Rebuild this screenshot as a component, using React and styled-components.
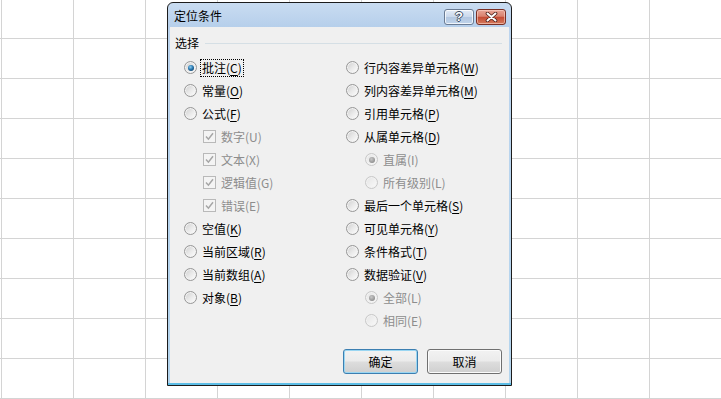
import React from "react";
import styled, { createGlobalStyle, css } from "styled-components";

const GlobalStyle = createGlobalStyle`
  html, body {
    margin: 0;
    padding: 0;
    background: #fff;
  }
  * {
    box-sizing: border-box;
  }
`;

const leftItems = [
  { kind: "radio", text: "批注", key: "C", checked: true, focused: true },
  { kind: "radio", text: "常量", key: "O" },
  { kind: "radio", text: "公式", key: "F" },
  { kind: "check", text: "数字", key: "U", sub: true, disabled: true, checked: true },
  { kind: "check", text: "文本", key: "X", sub: true, disabled: true, checked: true },
  { kind: "check", text: "逻辑值", key: "G", sub: true, disabled: true, checked: true },
  { kind: "check", text: "错误", key: "E", sub: true, disabled: true, checked: true },
  { kind: "radio", text: "空值", key: "K" },
  { kind: "radio", text: "当前区域", key: "R" },
  { kind: "radio", text: "当前数组", key: "A" },
  { kind: "radio", text: "对象", key: "B" },
];

const rightItems = [
  { kind: "radio", text: "行内容差异单元格", key: "W" },
  { kind: "radio", text: "列内容差异单元格", key: "M" },
  { kind: "radio", text: "引用单元格", key: "P" },
  { kind: "radio", text: "从属单元格", key: "D" },
  { kind: "radio", text: "直属", key: "I", sub: true, disabled: true, checked: true },
  { kind: "radio", text: "所有级别", key: "L", sub: true, disabled: true },
  { kind: "radio", text: "最后一个单元格", key: "S" },
  { kind: "radio", text: "可见单元格", key: "Y" },
  { kind: "radio", text: "条件格式", key: "T" },
  { kind: "radio", text: "数据验证", key: "V" },
  { kind: "radio", text: "全部", key: "L", sub: true, disabled: true, checked: true },
  { kind: "radio", text: "相同", key: "E", sub: true, disabled: true },
];

function Option({ item }) {
  const { kind, text, key, checked, disabled, sub, focused } = item;
  return (
    <Row $sub={sub}>
      {kind === "radio" ? (
        <Radio $checked={checked} $disabled={disabled} />
      ) : (
        <CheckBox $disabled={disabled}>
          {checked && (
            <svg width="9" height="9" viewBox="0 0 9 9">
              <path
                d="M1 4.6 L3.4 7.2 L8 1.2"
                fill="none"
                stroke={disabled ? "#a6a6a6" : "#1e395b"}
                strokeWidth="1.5"
              />
            </svg>
          )}
        </CheckBox>
      )}
      <Label $disabled={disabled} $focused={focused}>
        {text}(
        {disabled ? key : <u>{key}</u>})
      </Label>
    </Row>
  );
}

export default function App() {
  return (
    <>
      <GlobalStyle />
      <Sheet>
        <Dialog>
          <TitleBar>
            <Title>定位条件</Title>
            <CaptionButtons>
              <HelpButton>?</HelpButton>
              <CloseButton>
                <svg width="13" height="10" viewBox="0 0 13 10">
                  <path
                    d="M2.5 1.5 L10.5 8.5 M10.5 1.5 L2.5 8.5"
                    stroke="#4b1d16"
                    strokeWidth="3.6"
                    strokeLinecap="round"
                  />
                  <path
                    d="M2.5 1.5 L10.5 8.5 M10.5 1.5 L2.5 8.5"
                    stroke="#fff"
                    strokeWidth="2"
                    strokeLinecap="round"
                  />
                </svg>
              </CloseButton>
            </CaptionButtons>
          </TitleBar>
          <Body>
            <GroupHeader>
              <GroupLabel>选择</GroupLabel>
              <GroupLine />
            </GroupHeader>
            <Options>
              <Column>
                {leftItems.map((item, i) => (
                  <Option key={i} item={item} />
                ))}
              </Column>
              <Column>
                {rightItems.map((item, i) => (
                  <Option key={i} item={item} />
                ))}
              </Column>
            </Options>
            <Buttons>
              <PushButton $default>确定</PushButton>
              <PushButton>取消</PushButton>
            </Buttons>
          </Body>
        </Dialog>
      </Sheet>
    </>
  );
}

const Sheet = styled.div`
  position: relative;
  width: 721px;
  height: 399px;
  overflow: hidden;
  background-color: #fff;
  background-image: linear-gradient(to right, #d4d4d4 1px, transparent 1px),
    linear-gradient(to bottom, #d4d4d4 1px, transparent 1px);
  background-size: 72px 40px;
  background-position: 1px 0, 0 38px;
  font-family: "Noto Sans CJK SC", "Microsoft YaHei", sans-serif;
  font-size: 12px;
  color: #000;
`;

const Dialog = styled.div`
  position: absolute;
  left: 167px;
  top: 2px;
  width: 345px;
  height: 384px;
  display: flex;
  flex-direction: column;
  border: 1px solid #1c1c1c;
  border-radius: 6px 6px 0 0;
  background: linear-gradient(
    to bottom,
    #c9dcf1 0px,
    #b6cfeb 24px,
    #bcd4ee 26px,
    #b4d5ee calc(100% - 2px),
    #5cbde6 calc(100% - 2px)
  );
`;

const TitleBar = styled.div`
  height: 24px;
  display: flex;
  align-items: flex-start;
  padding-left: 6px;
`;

const Title = styled.div`
  margin-top: 4px;
  line-height: 18px;
  font-size: 12px;
`;

const CaptionButtons = styled.div`
  margin-left: auto;
  margin-top: 6px;
  margin-right: 5px;
  display: flex;
  gap: 2px;
`;

const captionBase = css`
  height: 16px;
  border-radius: 3px;
  display: flex;
  align-items: center;
  justify-content: center;
`;

const HelpButton = styled.div`
  ${captionBase}
  width: 30px;
  border: 1px solid #6a7b93;
  background: linear-gradient(to bottom, #e3ebf6 0%, #c9d8ec 50%, #b3c7e1 51%, #bfd3ea 100%);
  box-shadow: inset 0 0 0 1px rgba(255, 255, 255, 0.75);
  font-family: "Liberation Sans", Arial, sans-serif;
  font-weight: bold;
  font-size: 13px;
  line-height: 14px;
  color: #fff;
  text-shadow: 1px 0 0 #3e4c61, -1px 0 0 #3e4c61, 0 1px 0 #3e4c61, 0 -1px 0 #3e4c61;
`;

const CloseButton = styled.div`
  ${captionBase}
  width: 30px;
  border: 1px solid #7a2f24;
  background: linear-gradient(to bottom, #e8a597 0%, #d9826f 45%, #c54c35 52%, #d37a5c 100%);
  box-shadow: inset 0 0 0 1px rgba(255, 220, 210, 0.55);
`;

const Body = styled.div`
  flex: 1;
  margin: 0 2px 2px;
  background: #f0f0f0;
  display: flex;
  flex-direction: column;
  padding: 7px 7px 9px 5px;
`;

const GroupHeader = styled.div`
  height: 18px;
  display: flex;
  align-items: center;
`;

const GroupLabel = styled.span`
  line-height: 18px;
`;

const GroupLine = styled.div`
  flex: 1;
  height: 1px;
  margin: 1px 0 0 6px;
  background: #d5dfe5;
`;

const Options = styled.div`
  display: grid;
  grid-template-columns: 162px 1fr;
  margin-top: 4px;
  padding-left: 9px;
`;

const Column = styled.div`
  display: flex;
  flex-direction: column;
`;

const Row = styled.div`
  height: 23px;
  display: flex;
  align-items: center;
  padding-left: ${({ $sub }) => ($sub ? "19px" : "0")};
`;

const Radio = styled.span`
  position: relative;
  width: 13px;
  height: 13px;
  flex: none;
  border-radius: 50%;
  border: 1px solid ${({ $disabled }) => ($disabled ? "#c8c8c8" : "#979797")};
  background: ${({ $disabled }) =>
    $disabled
      ? "linear-gradient(135deg, #e4e4e4, #fafafa)"
      : "linear-gradient(135deg, #cdcdcd 0%, #e9e9e9 50%, #ffffff 100%)"};
  box-shadow: inset 0 0 0 1px ${({ $disabled }) => ($disabled ? "#f2f2f2" : "#f3f3f3")};

  &::after {
    content: "";
    display: ${({ $checked }) => ($checked ? "block" : "none")};
    position: absolute;
    left: 2.5px;
    top: 2.5px;
    width: 6px;
    height: 6px;
    border-radius: 50%;
    background: ${({ $disabled }) =>
      $disabled
        ? "radial-gradient(circle at 40% 35%, #c8c8c8, #8e8e8e 75%)"
        : "radial-gradient(circle at 40% 35%, #8fd0f2, #2a78b0 45%, #14466e 80%)"};
  }
`;

const CheckBox = styled.span`
  width: 13px;
  height: 13px;
  flex: none;
  display: flex;
  align-items: center;
  justify-content: center;
  border: 1px solid ${({ $disabled }) => ($disabled ? "#b9b9b9" : "#8e8f8f")};
  background: ${({ $disabled }) => ($disabled ? "#f4f4f4" : "#fff")};
`;

const Label = styled.span`
  margin-left: 3px;
  padding: 0 1px;
  line-height: 16px;
  white-space: nowrap;
  border: 1px dotted ${({ $focused }) => ($focused ? "#000" : "transparent")};
  color: ${({ $disabled }) => ($disabled ? "#8d8d8d" : "#000")};

  u {
    text-underline-offset: 2px;
  }
`;

const Buttons = styled.div`
  margin-top: auto;
  display: flex;
  justify-content: flex-end;
  gap: 9px;
`;

const PushButton = styled.div`
  width: 75px;
  height: 25px;
  display: flex;
  align-items: center;
  justify-content: center;
  border-radius: 3px;
  border: 1px solid ${({ $default }) => ($default ? "#3c7fb1" : "#707070")};
  background: linear-gradient(to bottom, #f2f2f2 0%, #ebebeb 48%, #dddddd 52%, #cfcfcf 100%);
  box-shadow: inset 0 0 0 1px ${({ $default }) => ($default ? "#9ad6f2" : "#fbfbfb")};
  line-height: 16px;
`;
